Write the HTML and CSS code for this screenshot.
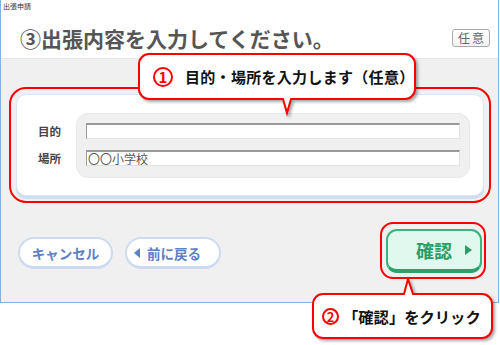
FILE: index.html
```html
<!doctype html>
<html>
	<head>
		<meta charset="utf-8">
		<title>出張申請</title>
		<link rel="stylesheet" href="styles.css">
	</head>
	<body>
		<div id="window">
			<div class="titlebar">出張申請</div>
			<div class="header">
				<h1>③出張内容を入力してください。</h1>
				<span class="badge">任意</span>
			</div>
			<div class="content">
				<div class="panel">
					<div class="labels">
						<label>目的</label>
						<label>場所</label>
					</div>
					<div class="fields">
						<div class="field"></div>
						<div class="field">〇〇小学校</div>
					</div>
				</div>
				<div class="buttons">
					<div class="left">
						<a class="btn">キャンセル</a>
						<a class="btn back"><i class="tri-left"></i>前に戻る</a>
					</div>
					<a class="btn-ok">確認<i class="tri-right"></i></a>
				</div>
			</div>
		</div>

		<!-- annotations -->
		<div class="callout one">
			<svg width="282" height="64"><path d="M11,1 H267 A10,10 0 0 1 277,11 V36 A10,10 0 0 1 267,46 H153 L149,60 L145,46 H11 A10,10 0 0 1 1,36 V11 A10,10 0 0 1 11,1 Z"/></svg>
			<span class="num">1</span>目的・場所を入力します（任意）
		</div>
		<div class="callout two">
			<svg width="186" height="66"><path d="M11,16 H92 L96,1 L101,16 H170 A10,10 0 0 1 180,26 V50 A10,10 0 0 1 170,60 H11 A10,10 0 0 1 1,50 V26 A10,10 0 0 1 11,16 Z"/></svg>
			<span class="num">2</span>「確認」をクリック
		</div>
	</body>
</html>
```

FILE: styles.css
```css
body {
	margin: 0;
	background: white;
	font-family: "Noto Sans CJK JP", sans-serif;
	position: relative;
	width: 500px;
	height: 345px;
	overflow: hidden;
}

#window {
	width: 499px;
	height: 303px;
	box-sizing: border-box;
	border: 1px solid #80b4de;
	border-top: none;
	display: flex;
	flex-direction: column;
}

.titlebar {
	height: 13px;
	font-size: 7px;
	line-height: 13px;
	padding-left: 2px;
	color: #333;
}

.header {
	height: 45px;
	box-sizing: border-box;
	padding: 4px 8px 0 19px;
	display: flex;
	align-items: center;
	justify-content: space-between;
}
.header h1 {
	margin: 0;
	font-size: 21px;
	font-weight: bold;
	color: #555;
	line-height: 30px;
}
.badge {
	width: 38px;
	height: 18px;
	box-sizing: border-box;
	border: 1px solid #aaa;
	border-radius: 3px;
	background: linear-gradient(#fff, #f2f2f2);
	font-size: 12px;
	line-height: 16px;
	color: #666;
	text-align: center;
	letter-spacing: 2px;
	text-indent: 2px;
}

.content {
	flex: 1;
	background: #f0f0f0;
	border-top: 1px solid #e6e6e6;
	padding: 35px 14px 0 15px;
}

.panel {
	display: flex;
	background: white;
	border: 1px solid #dbe5f4;
	border-radius: 10px;
	box-shadow: 0 3px 0 #d0dcf0;
	padding: 18px 13px 17px 21px;
	outline: 2px solid #f00;
	outline-offset: 5px;
}
.labels {
	width: 38px;
	padding-top: 10px;
	display: flex;
	flex-direction: column;
	gap: 11px;
}
.labels label {
	height: 16px;
	line-height: 16px;
	font-size: 11.5px;
	font-weight: bold;
	color: #444;
}
.fields {
	flex: 1;
	background: #f0f0f0;
	border: 1px solid #e8e8e8;
	border-radius: 12px;
	padding: 9px 9px 11px 9px;
	display: flex;
	flex-direction: column;
	gap: 11px;
}
.field {
	height: 16px;
	box-sizing: border-box;
	background: white;
	border-top: 2px solid #999;
	border-left: 1px solid #999;
	border-right: 1px solid #e2e2e2;
	border-bottom: 1px solid #e2e2e2;
	font-size: 12px;
	line-height: 13px;
	color: #555;
	padding-left: 1px;
}

.buttons {
	margin: 33px 2px 0 2px;
	display: flex;
	justify-content: space-between;
	align-items: flex-start;
}
.buttons .left {
	display: flex;
	gap: 12px;
	margin-top: 8px;
}
.btn {
	width: 95px;
	height: 32px;
	box-sizing: border-box;
	background: white;
	border: 2px solid #cddbf1;
	border-bottom-width: 3px;
	border-radius: 16px;
	display: flex;
	align-items: center;
	justify-content: center;
	font-size: 13.5px;
	font-weight: bold;
	color: #5b80c8;
}
.btn.back {
	width: 96px;
	justify-content: flex-start;
	padding-left: 7px;
}
.tri-left {
	width: 0;
	height: 0;
	border-top: 5px solid transparent;
	border-bottom: 5px solid transparent;
	border-right: 6px solid #5b80c8;
	margin-right: 7px;
}

.btn-ok {
	position: relative;
	width: 96px;
	height: 44px;
	box-sizing: border-box;
	background: #e0f8ee;
	border: 2px solid #36b57e;
	border-bottom: 4px solid #2aa26c;
	border-radius: 11px;
	display: flex;
	align-items: center;
	padding-left: 28px;
	font-size: 18px;
	font-weight: bold;
	color: #2a9d68;
}
.btn-ok:after {
	content: "";
	position: absolute;
	top: -9px;
	left: -8px;
	right: -6px;
	bottom: -10px;
	border: 2px solid #f00;
	border-radius: 13px;
}
.tri-right {
	width: 0;
	height: 0;
	border-top: 5px solid transparent;
	border-bottom: 5px solid transparent;
	border-left: 7px solid #2a9d68;
	margin-left: 13px;
}

.callout {
	position: absolute;
	z-index: 5;
	display: flex;
	align-items: center;
	font-weight: bold;
	font-size: 15px;
	color: #111;
}
.callout svg {
	position: absolute;
	left: 0;
	top: 0;
	z-index: -1;
	filter: drop-shadow(2px 2px 1.5px rgba(0, 0, 0, 0.35));
}
.callout svg path {
	fill: white;
	stroke: #f00;
	stroke-width: 2;
}
.callout .num {
	border: 2px solid #f00;
	border-radius: 50%;
	color: #f00;
	text-align: center;
	font-weight: bold;
}
.callout.one {
	left: 138px;
	top: 53px;
	width: 278px;
	height: 47px;
	padding-left: 15px;
	box-sizing: border-box;
	letter-spacing: 0.3px;
}
.callout.one .num {
	width: 16px;
	height: 16px;
	line-height: 16px;
	font-size: 15px;
	margin-right: 12px;
}
.callout.two {
	left: 312px;
	top: 278px;
	width: 181px;
	height: 60px;
	padding: 16px 0 0 10px;
	box-sizing: border-box;
	font-size: 15.3px;
}
.callout.two .num {
	width: 13px;
	height: 13px;
	line-height: 13px;
	font-size: 13px;
	margin-right: 4px;
}
```
